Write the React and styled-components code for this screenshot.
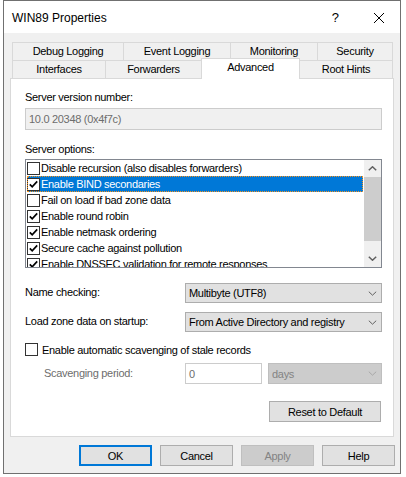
import React from 'react';
import styled, { createGlobalStyle } from 'styled-components';

const GlobalStyle = createGlobalStyle`
  body {
    margin: 0;
    background: #ffffff;
    font-family: "Liberation Sans", Arial, sans-serif;
  }
`;

const Window = styled.div`
  margin-left: 3px;
  width: 398px;
  height: 474px;
  box-sizing: border-box;
  border: 1px solid #707070;
  background: #f0f0f0;
  display: flex;
  flex-direction: column;
  font-size: 11px;
  letter-spacing: -0.3px;
  color: #000;
`;

const TitleBar = styled.div`
  height: 32px;
  background: #ffffff;
  display: flex;
  align-items: center;
  padding: 1px 16px 0 8px;
  letter-spacing: 0;
`;

const Title = styled.span`
  font-size: 12px;
  flex: 1;
`;

const HelpGlyph = styled.span`
  font-size: 13px;
  margin-right: 35px;
`;

const Body = styled.div`
  flex: 1;
  display: flex;
  flex-direction: column;
  padding: 9px 6px 7px 6px;
`;

const TabStrip = styled.div`
  margin-left: 2px;
  display: flex;
  flex-direction: column;
`;

const TabRow = styled.div`
  display: flex;
  align-items: flex-start;
  height: 18px;
`;

const Tab = styled.div`
  box-sizing: border-box;
  width: ${p => p.$w}px;
  height: 18px;
  border-top: 1px solid #d9d9d9;
  border-left: ${p => (p.$noLeft ? 'none' : '1px solid #d9d9d9')};
  border-right: ${p => (p.$last ? '1px solid #d9d9d9' : 'none')};
  background: #f0f0f0;
  display: flex;
  align-items: center;
  justify-content: center;
  padding-bottom: 1px;
`;

const ActiveTab = styled(Tab)`
  position: relative;
  z-index: 1;
  height: 21px;
  margin-top: -2px;
  margin-bottom: -1px;
  border-right: 1px solid #d9d9d9;
  background: #ffffff;
  align-items: flex-start;
  padding-top: 2px;
`;

const Panel = styled.div`
  box-sizing: border-box;
  height: 359px;
  border: 1px solid #d9d9d9;
  background: #ffffff;
  display: flex;
  flex-direction: column;
  padding: 12px 11px 14px 14px;
`;

const FieldLabel = styled.div`
  height: 13px;
  line-height: 13px;
  margin-top: ${p => p.$top || 0}px;
`;

const ReadOnlyBox = styled.div`
  box-sizing: border-box;
  height: 22px;
  margin-top: 4px;
  border: 1px solid #cccccc;
  background: #f0f0f0;
  color: #6d6d6d;
  display: flex;
  align-items: center;
  padding-left: 3px;
`;

const OptionList = styled.div`
  box-sizing: border-box;
  height: 109px;
  margin-top: 3px;
  border: 1px solid #828790;
  display: flex;
`;

const OptionItems = styled.div`
  flex: 1;
  overflow: hidden;
`;

const OptionRow = styled.div`
  height: 16px;
  margin: 0 1px;
  display: flex;
  align-items: center;
  gap: 1px;
  white-space: nowrap;
  background: ${p => (p.$selected ? '#0078d7' : 'transparent')};
  color: ${p => (p.$selected ? '#ffffff' : '#000000')};
  outline: ${p => (p.$selected ? '1px dotted #f7931e' : 'none')};
  outline-offset: -1px;
`;

const CheckBox = styled.span`
  box-sizing: border-box;
  width: 13px;
  height: 13px;
  flex-shrink: 0;
  border: 1px solid #333333;
  background: #ffffff;
  display: flex;
  align-items: center;
  justify-content: center;
`;

const ScrollTrack = styled.div`
  width: 17px;
  background: #f0f0f0;
  display: flex;
  flex-direction: column;
`;

const ScrollButton = styled.div`
  height: 17px;
  display: flex;
  align-items: center;
  justify-content: center;
`;

const ScrollThumb = styled.div`
  height: 64px;
  background: #cdcdcd;
`;

const ScrollGap = styled.div`
  flex: 1;
`;

const FormRow = styled.div`
  display: flex;
  align-items: center;
  margin-top: ${p => p.$top}px;
`;

const RowLabel = styled.div`
  width: ${p => 160 - (p.$indent || 0)}px;
  padding-left: ${p => p.$indent || 0}px;
  padding-bottom: 2px;
  color: ${p => (p.$dim ? '#6d6d6d' : '#000000')};
`;

const Combo = styled.div`
  box-sizing: border-box;
  width: ${p => p.$w}px;
  height: ${p => p.$h || 20}px;
  border: 1px solid ${p => (p.$disabled ? '#bfbfbf' : '#adadad')};
  background: ${p => (p.$disabled ? '#cccccc' : '#e1e1e1')};
  color: ${p => (p.$disabled ? '#838383' : '#000000')};
  display: flex;
  align-items: center;
  justify-content: space-between;
  padding: 0 4px 0 3px;
`;

const NumberInput = styled.div`
  box-sizing: border-box;
  width: 77px;
  height: 21px;
  margin-right: 6px;
  border: 1px solid #cccccc;
  background: #ffffff;
  color: #6d6d6d;
  display: flex;
  align-items: center;
  padding-left: 3px;
`;

const CheckRow = styled.div`
  display: flex;
  align-items: center;
  gap: 4px;
  height: 13px;
  margin-top: 11px;
`;

const ResetRow = styled.div`
  display: flex;
  justify-content: flex-end;
  margin-top: 17px;
  padding-right: 1px;
`;

const Button = styled.div`
  box-sizing: border-box;
  width: ${p => p.$w || 73}px;
  height: 21px;
  border: ${p => (p.$default ? '2px solid #0078d7' : `1px solid ${p.$disabled ? '#bfbfbf' : '#adadad'}`)};
  background: ${p => (p.$disabled ? '#cccccc' : '#e1e1e1')};
  color: ${p => (p.$disabled ? '#838383' : '#000000')};
  display: flex;
  align-items: center;
  justify-content: center;
`;

const ButtonBar = styled.div`
  display: flex;
  justify-content: flex-end;
  gap: 8px;
  margin-top: 8px;
  margin-right: -1px;
`;

const Tick = () => (
  <svg width="11" height="11" viewBox="0 0 11 11">
    <path d="M1.8 5.3 L4.2 7.8 L9.2 2.4" fill="none" stroke="#000" strokeWidth="1.7" />
  </svg>
);

const Chevron = ({ color = '#606060', up = false, width = 1 }) => (
  <svg width="9" height="5" viewBox="0 0 9 5">
    <path
      d={up ? 'M0.8 4.3 L4.5 0.8 L8.2 4.3' : 'M0.8 0.7 L4.5 4.2 L8.2 0.7'}
      fill="none"
      stroke={color}
      strokeWidth={width}
    />
  </svg>
);

const CloseIcon = () => (
  <svg width="10" height="10" viewBox="0 0 10 10">
    <path d="M0 0 L10 10 M10 0 L0 10" stroke="#000" strokeWidth="1" />
  </svg>
);

const options = [
  { label: 'Disable recursion (also disables forwarders)', checked: false },
  { label: 'Enable BIND secondaries', checked: true, selected: true },
  { label: 'Fail on load if bad zone data', checked: false },
  { label: 'Enable round robin', checked: true },
  { label: 'Enable netmask ordering', checked: true },
  { label: 'Secure cache against pollution', checked: true },
  { label: 'Enable DNSSEC validation for remote responses', checked: true },
];

export default function App() {
  return (
    <>
      <GlobalStyle />
      <Window>
        <TitleBar>
          <Title>WIN89 Properties</Title>
          <HelpGlyph>?</HelpGlyph>
          <CloseIcon />
        </TitleBar>
        <Body>
          <TabStrip>
            <TabRow>
              <Tab $w={111}>Debug Logging</Tab>
              <Tab $w={107}>Event Logging</Tab>
              <Tab $w={87}>Monitoring</Tab>
              <Tab $w={76} $last>Security</Tab>
            </TabRow>
            <TabRow>
              <Tab $w={93}>Interfaces</Tab>
              <Tab $w={96}>Forwarders</Tab>
              <ActiveTab $w={99}>Advanced</ActiveTab>
              <Tab $w={93} $noLeft $last>Root Hints</Tab>
            </TabRow>
          </TabStrip>
          <Panel>
            <FieldLabel>Server version number:</FieldLabel>
            <ReadOnlyBox>10.0 20348 (0x4f7c)</ReadOnlyBox>
            <FieldLabel $top={13}>Server options:</FieldLabel>
            <OptionList>
              <OptionItems>
                {options.map(o => (
                  <OptionRow key={o.label} $selected={o.selected}>
                    <CheckBox>{o.checked && <Tick />}</CheckBox>
                    {o.label}
                  </OptionRow>
                ))}
              </OptionItems>
              <ScrollTrack>
                <ScrollButton><Chevron up width={1.5} /></ScrollButton>
                <ScrollThumb />
                <ScrollGap />
                <ScrollButton><Chevron width={1.5} /></ScrollButton>
              </ScrollTrack>
            </OptionList>
            <FormRow $top={15}>
              <RowLabel>Name checking:</RowLabel>
              <Combo $w={197}>
                Multibyte (UTF8)
                <Chevron />
              </Combo>
            </FormRow>
            <FormRow $top={9}>
              <RowLabel>Load zone data on startup:</RowLabel>
              <Combo $w={197}>
                From Active Directory and registry
                <Chevron />
              </Combo>
            </FormRow>
            <CheckRow>
              <CheckBox />
              Enable automatic scavenging of stale records
            </CheckRow>
            <FormRow $top={7}>
              <RowLabel $indent={19} $dim>Scavenging period:</RowLabel>
              <NumberInput>0</NumberInput>
              <Combo $w={114} $h={21} $disabled>
                days
                <Chevron color="#a8a8a8" />
              </Combo>
            </FormRow>
            <ResetRow>
              <Button $w={112}>Reset to Default</Button>
            </ResetRow>
          </Panel>
          <ButtonBar>
            <Button $default>OK</Button>
            <Button>Cancel</Button>
            <Button $disabled>Apply</Button>
            <Button>Help</Button>
          </ButtonBar>
        </Body>
      </Window>
    </>
  );
}
